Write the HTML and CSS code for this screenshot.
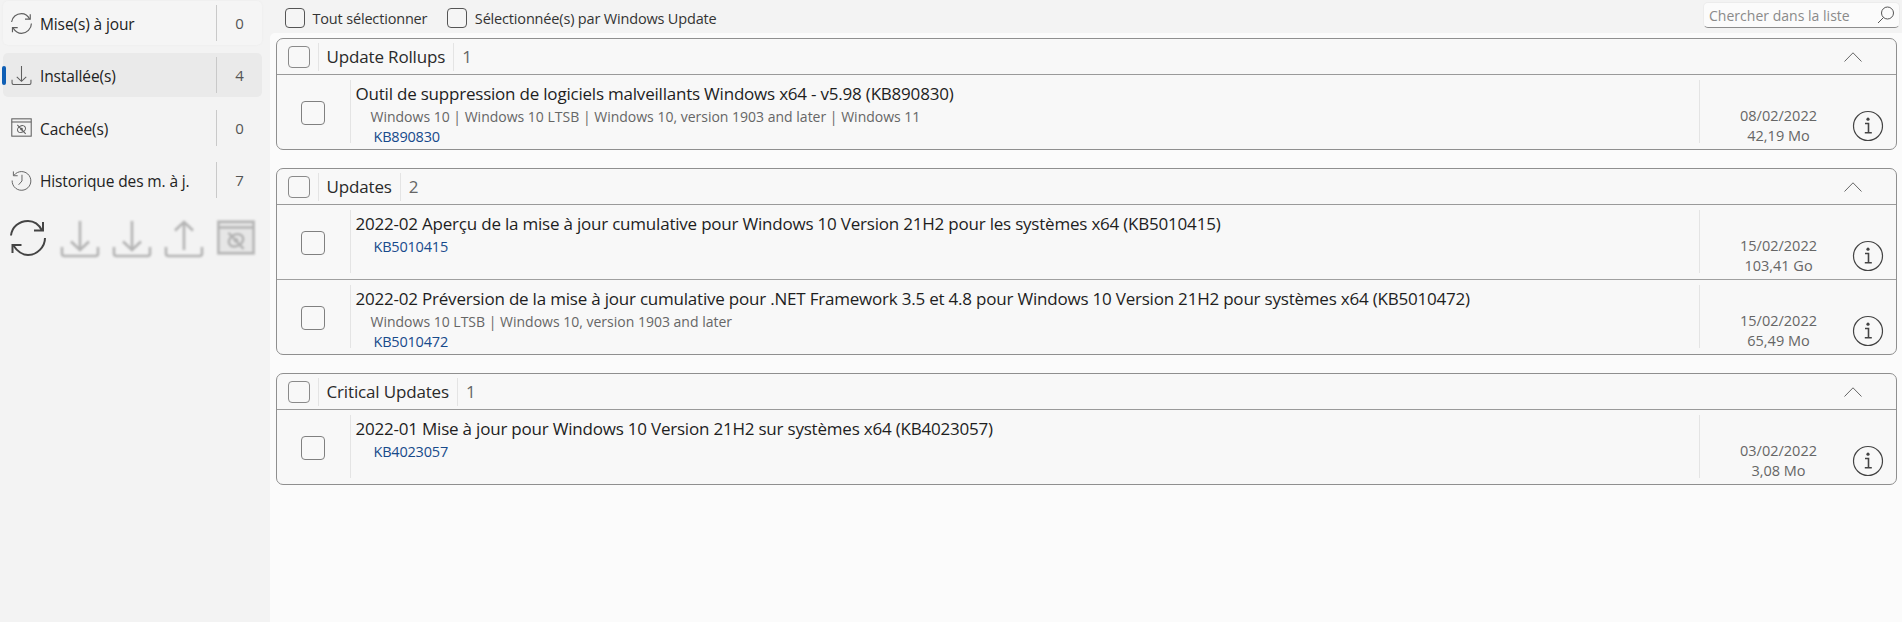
FILE: index.html
```html
<!DOCTYPE html>
<html lang="fr">
<head>
<meta charset="utf-8">
<title>Windows Update</title>
<link rel="stylesheet" href="styles.css">
</head>
<body>
<svg class="defs" width="0" height="0" aria-hidden="true">
  <symbol id="i-refresh" viewBox="0 0 36 36"><path d="M1 15.500C2 7 9 1 18 1c6 0 11 3.500 14 9.500M35 18c0 9-8 17-17 17-6 0-11-4-15-10" fill="none" stroke="currentColor"/><path d="M33 2v8.500h-9M2.500 33v-8h9" fill="none" stroke="currentColor"/></symbol>
  <symbol id="i-down" viewBox="0 0 40 38"><path d="M20 1v29M11 21.500 20 30l9-8.500M2 27v6.500c0 1.500 1 2.500 2.500 2.500h31c1.500 0 2.500-1 2.500-2.500V27" fill="none" stroke="currentColor"/></symbol>
  <symbol id="i-up" viewBox="0 0 40 38"><path d="M20 30V2M11 10.500 20 2l9 8.500M2 27v6.500c0 1.500 1 2.500 2.500 2.500h31c1.500 0 2.500-1 2.500-2.500V27" fill="none" stroke="currentColor"/></symbol>
  <symbol id="i-hidden" viewBox="0 0 40 36"><rect x="1.500" y="1.500" width="37" height="33" fill="none" stroke="currentColor"/><path d="M1.500 7.500h37" stroke="currentColor"/><ellipse cx="20" cy="21" rx="8" ry="6" transform="rotate(-30 20 21)" fill="none" stroke="currentColor"/><circle cx="20" cy="21" r="2.500" fill="currentColor"/><path d="m12 13 16 17" stroke="currentColor"/></symbol>
  <symbol id="i-history" viewBox="0 0 22 22"><path d="M3.200 5.500A9.800 9.800 0 1 1 1.200 11" fill="none" stroke="currentColor" stroke-width="1"/><path d="M2.500 1.500v4.500H7M11.500 5v6.500L8 15.500" fill="none" stroke="currentColor" stroke-width="1"/></symbol>
  <symbol id="i-info" viewBox="0 0 32 32"><circle cx="16" cy="16" r="14.500" fill="none" stroke="currentColor" stroke-width="1.200"/><circle cx="16" cy="9.200" r="1.600" fill="currentColor"/><path d="M13 13.500h3.500v9M12.800 22.800h7" fill="none" stroke="currentColor" stroke-width="1.600"/></symbol>
  <symbol id="i-search" viewBox="0 0 18 18"><circle cx="10.500" cy="7" r="6" fill="none" stroke="currentColor"/><path d="M6.500 11.500 1 17" stroke="currentColor"/></symbol>
  <symbol id="i-chevron" viewBox="0 0 18 10"><path d="M.5 9.500 9 .8l8.500 8.700" fill="none" stroke="currentColor"/></symbol>
</svg>
<div class="app">
  <aside class="sidebar">
    <nav class="nav">
      <div class="nav-item nav-raised"><svg class="nav-icon"><use href="#i-refresh"/></svg><span class="nav-label">Mise(s) à jour</span><span class="nav-count">0</span></div>
      <div class="nav-item nav-active"><svg class="nav-icon"><use href="#i-down"/></svg><span class="nav-label">Installée(s)</span><span class="nav-count">4</span></div>
      <div class="nav-item"><svg class="nav-icon"><use href="#i-hidden"/></svg><span class="nav-label">Cachée(s)</span><span class="nav-count">0</span></div>
      <div class="nav-item"><svg class="nav-icon"><use href="#i-history"/></svg><span class="nav-label">Historique des m. à j.</span><span class="nav-count">7</span></div>
    </nav>
    <div class="actions">
      <svg class="act act-refresh"><use href="#i-refresh"/></svg>
      <svg class="act act-off"><use href="#i-down"/></svg>
      <svg class="act act-off"><use href="#i-down"/></svg>
      <svg class="act act-off"><use href="#i-up"/></svg>
      <svg class="act act-off act-window"><use href="#i-hidden"/></svg>
    </div>
  </aside>
  <main class="main">
    <div class="toolbar">
      <label class="tool-check"><span class="box box-tool"></span><span>Tout sélectionner</span></label>
      <label class="tool-check"><span class="box box-tool"></span><span>Sélectionnée(s) par Windows Update</span></label>
      <div class="search"><span class="search-text">Chercher dans la liste</span><svg class="search-icon"><use href="#i-search"/></svg></div>
    </div>
    <div class="list">
      <section class="group">
        <header class="group-head"><span class="box box-head"></span><span class="group-name">Update Rollups</span><span class="group-count">1</span><svg class="chevron"><use href="#i-chevron"/></svg></header>
        <div class="row">
          <div class="row-check"><span class="box box-row"></span></div>
          <div class="row-body"><div class="row-title">Outil de suppression de logiciels malveillants Windows x64 - v5.98 (KB890830)</div><div class="row-sub">Windows 10 | Windows 10 LTSB | Windows 10, version 1903 and later | Windows 11</div><div class="row-kb">KB890830</div></div>
          <div class="row-meta"><div>08/02/2022</div><div>42,19 Mo</div></div>
          <svg class="info"><use href="#i-info"/></svg>
        </div>
      </section>
      <section class="group">
        <header class="group-head"><span class="box box-head"></span><span class="group-name">Updates</span><span class="group-count">2</span><svg class="chevron"><use href="#i-chevron"/></svg></header>
        <div class="row">
          <div class="row-check"><span class="box box-row"></span></div>
          <div class="row-body"><div class="row-title">2022-02 Aperçu de la mise à jour cumulative pour Windows 10 Version 21H2 pour les systèmes x64 (KB5010415)</div><div class="row-kb">KB5010415</div></div>
          <div class="row-meta"><div>15/02/2022</div><div>103,41 Go</div></div>
          <svg class="info"><use href="#i-info"/></svg>
        </div>
        <div class="row">
          <div class="row-check"><span class="box box-row"></span></div>
          <div class="row-body"><div class="row-title">2022-02 Préversion de la mise à jour cumulative pour .NET Framework 3.5 et 4.8 pour Windows 10 Version 21H2 pour systèmes x64 (KB5010472)</div><div class="row-sub">Windows 10 LTSB | Windows 10, version 1903 and later</div><div class="row-kb">KB5010472</div></div>
          <div class="row-meta"><div>15/02/2022</div><div>65,49 Mo</div></div>
          <svg class="info"><use href="#i-info"/></svg>
        </div>
      </section>
      <section class="group">
        <header class="group-head"><span class="box box-head"></span><span class="group-name">Critical Updates</span><span class="group-count">1</span><svg class="chevron"><use href="#i-chevron"/></svg></header>
        <div class="row">
          <div class="row-check"><span class="box box-row"></span></div>
          <div class="row-body"><div class="row-title">2022-01 Mise à jour pour Windows 10 Version 21H2 sur systèmes x64 (KB4023057)</div><div class="row-kb">KB4023057</div></div>
          <div class="row-meta"><div>03/02/2022</div><div>3,08 Mo</div></div>
          <svg class="info"><use href="#i-info"/></svg>
        </div>
      </section>
    </div>
  </main>
</div>
</body>
</html>
```
FILE: styles.css
```css
* { box-sizing: border-box; }
html, body { margin: 0; height: 100%; overflow: hidden; }
body { background: #f3f3f3; color: #1b1b1b; font-family: "Open Sans", "Noto Sans", sans-serif; }
.defs { position: absolute; }
.app { display: flex; height: 622px; }

.sidebar { width: 270px; flex: none; padding: 1px 8px 0 3px; }
.nav { display: flex; flex-direction: column; gap: 8.4px; }
.nav-item { position: relative; display: flex; align-items: center; height: 44px; padding-left: 8px; border-radius: 5px; font-size: 15.500px; letter-spacing: -.12px; color: #222; }
.nav-raised { background: #f5f5f5; box-shadow: 0 0 2px #e9e9e9; }
.nav-active { background: #eaeaea; }
.nav-active::before { content: ""; position: absolute; left: -1px; top: 13px; width: 4px; height: 19px; border-radius: 2px; background: #0f5fb5; }
.nav-icon { width: 21px; height: 21px; flex: none; color: #5f5f5f; stroke-width: 2; }
.nav-label { margin-left: 8px; padding-top: 2px; width: 176px; flex: none; white-space: nowrap; }
.nav-count { position: relative; flex: 1; text-align: center; height: 36px; line-height: 37px; font-size: 15px; color: #555; border-left: 1px solid #c9c9c9; }

.actions { display: flex; align-items: flex-start; gap: 12px; margin-top: 18px; padding-left: 7px; }
.act { flex: none; width: 40px; height: 38px; }
.act-refresh { width: 36px; height: 36px; margin-right: 2px; color: #444; stroke-width: 2; }
.act-off { color: #b4b4b4; stroke-width: 2.600; filter: blur(.8px); }
.act-window { background: #e6e6e6; width: 38px; height: 35px; margin-left: 1px; }

.main { flex: 1; min-width: 0; display: flex; flex-direction: column; }
.toolbar { height: 33px; flex: none; display: flex; align-items: flex-start; padding: 8px 2px 0 15px; font-size: 14.500px; letter-spacing: -.17px; color: #333; }
.tool-check { display: flex; align-items: center; gap: 7.500px; margin-right: 20px; height: 20px; white-space: nowrap; }
.box { display: block; flex: none; background: #f8f8f8; border: 1px solid #6b6b6b; border-radius: 4px; }
.box-tool { width: 20px; height: 20px; background: #f5f5f5; border-color: #555; }
.box-head { width: 22px; height: 22px; border-color: #8a8a8a; }
.box-row { width: 24px; height: 24px; border-color: #808080; }
.search { margin-left: auto; margin-top: -6px; width: 197px; height: 26px; display: flex; align-items: center; justify-content: space-between; padding: 0 4px 0 5px; background: #fbfbfb; border-radius: 5px; border: 1px solid #ececec; border-bottom: 1px solid #8c8c8c; }
.search-text { font-size: 14px; letter-spacing: .02px; color: #8a8a8a; white-space: nowrap; }
.search-icon { width: 18px; height: 18px; color: #555; }

.list { flex: 1; background: #fbfbfb; border-top-left-radius: 5px; padding: 5px 5px 0 5.500px; display: flex; flex-direction: column; gap: 18px; }
.group { border: 1px solid #8f8f8f; border-radius: 7px; background: #f8f8f8; overflow: hidden; }
.group-head { height: 36px; display: flex; align-items: center; padding-left: 11px; font-size: 17px; letter-spacing: -.156px; border-bottom: 1px solid #9a9a9a; color: #2a2a2a; }
.group-name { margin-left: 8px; height: 28px; line-height: 27px; padding: 0 8px; border-left: 1px solid #e4e4e4; border-right: 1px solid #e4e4e4; white-space: nowrap; }
.group-count { margin-left: 8px; color: #666; }
.chevron { width: 18px; height: 10px; margin-left: auto; margin-right: 34px; color: #666; stroke-width: 1; }

.row { height: 74px; display: flex; align-items: stretch; padding: 5px 0 6px; }
.row + .row { border-top: 1px solid #a0a0a0; height: 75px; }
.row-check { width: 74px; flex: none; padding: 21px 0 0 24px; border-right: 1px solid #e4e4e4; }
.row-body { flex: 1; min-width: 0; padding: 3px 0 0 5px; }
.row-title { height: 22px; line-height: 22px; font-size: 17px; letter-spacing: -.21px; color: #1e1e1e; white-space: nowrap; }
.row-sub { height: 21px; line-height: 21px; padding-left: 15px; font-size: 14px; color: #666; white-space: nowrap; margin-top: 1px; }
.row-kb { height: 20px; line-height: 20px; padding-left: 18px; font-size: 14.500px; letter-spacing: -.2px; color: #174a8b; }
.row-title + .row-kb { height: 21px; line-height: 21px; margin-top: 1px; }
.row-meta { width: 153px; flex: none; padding: 26px 0 0 5px; border-left: 1px solid #e4e4e4; font-size: 14.500px; line-height: 20px; text-align: center; color: #666; }
.row-meta > div { height: 20px; }
.info { width: 32px; height: 32px; flex: none; margin: 30px 12px 0 0; color: #444; }
```
